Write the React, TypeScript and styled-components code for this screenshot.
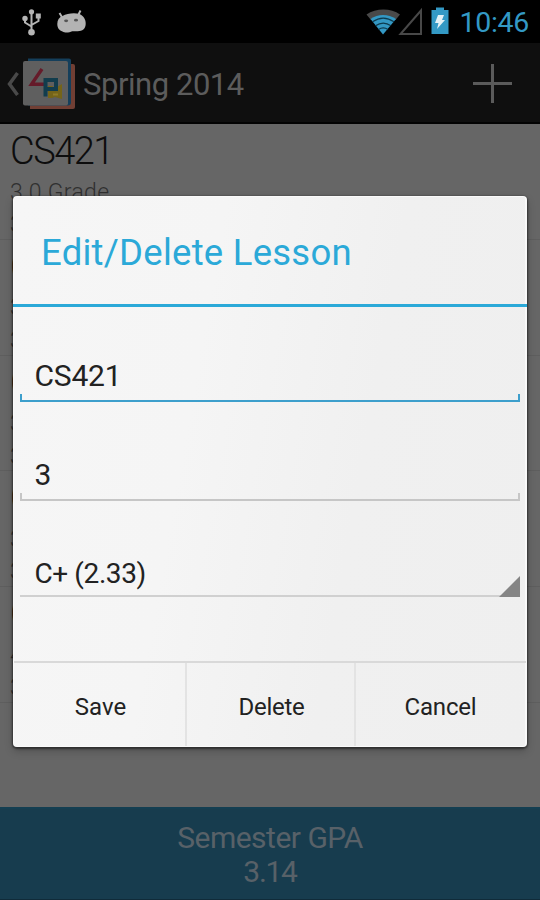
import React from 'react';
import styled, { createGlobalStyle } from 'styled-components';

const GlobalStyle = createGlobalStyle`
  * { box-sizing: border-box; }
  body { margin: 0; background: #666; font-family: Roboto, "Noto Sans", sans-serif; }
`;

const Screen = styled.div`
  position: relative;
  display: flex;
  flex-direction: column;
  width: 540px;
  height: 900px;
  overflow: hidden;
  background: #666;
`;

const Text = styled.span<{ $size: number; $spacing?: number; $weight?: number; $color?: string }>`
  font-size: ${p => p.$size}px;
  font-weight: ${p => p.$weight ?? 400};
  letter-spacing: ${p => p.$spacing ?? 0}px;
  color: ${p => p.$color ?? '#222'};
  line-height: 1;
  white-space: nowrap;
`;

const StatusBar = styled.header`
  display: flex;
  align-items: flex-start;
  justify-content: space-between;
  height: 43px;
  padding: 7px 11px 0 21px;
  background: #000;
  svg { display: block; flex: none; }
`;

const StatusGroup = styled.div<{ $gap: number }>`
  display: flex;
  gap: ${p => p.$gap}px;
`;

const Clock = styled(Text)`
  padding: 2px 0 0 11px;
`;

const ActionBar = styled.nav`
  display: flex;
  align-items: center;
  height: 81px;
  padding: 3px 27px 0 6px;
  background: #0f0f0f;
  border-bottom: 2px solid #030303;
  svg { display: block; flex: none; }
`;

const BarTitle = styled(Text)`
  flex: 1;
  margin-left: 7px;
  padding-top: 1px;
`;

const LessonList = styled.main`
  flex: 1;
`;

const LessonRow = styled.article`
  display: flex;
  flex-direction: column;
  height: 115.8px;
  padding: 8px 10px 0;
  border-bottom: 1px solid #5e5e5e;
`;

const LessonTitle = styled(Text)`
  margin-bottom: 1px;
`;

const LessonDetail = styled(Text)`
  margin-top: 9.5px;
`;

const GpaBar = styled.footer`
  display: flex;
  flex-direction: column;
  align-items: center;
  gap: 4px;
  height: 93px;
  padding-top: 14px;
  background: #173c4e;
  border-top: 2px solid #143f52;
  border-bottom: 1px solid #102b39;
`;

const Dialog = styled.section`
  position: absolute;
  left: 13px;
  top: 196px;
  display: flex;
  flex-direction: column;
  width: 514px;
  height: 551px;
  border: 1px solid #fafafa;
  border-right: 2px solid #f9f9f9;
  border-radius: 4px;
  background: linear-gradient(100deg, #f6f6f6 0%, #f5f5f5 35%, #f0f0f0 65%, #efefef 100%);
  box-shadow: 0 1px 2px 1px rgba(0, 0, 0, 0.45), 0 4px 9px rgba(0, 0, 0, 0.22);
`;

const DialogTitle = styled.h2`
  display: flex;
  align-items: center;
  height: 110px;
  margin: 0 -2px 0 -1px;
  padding: 5px 0 0 28px;
  border-bottom: 3px solid #2ba9d8;
`;

const Form = styled.div`
  display: flex;
  flex-direction: column;
  flex: 1;
  padding: 0 5px 0 6px;
`;

const Field = styled.div<{ $height: number; $color: string; $line: number; $ticks: boolean }>`
  display: flex;
  align-items: flex-end;
  height: ${p => p.$height}px;
  padding: 0 0 ${p => (p.$ticks ? 11 : 9)}px 14.5px;
  background-image: ${p => {
    const fill = `linear-gradient(${p.$color}, ${p.$color})`;
    return p.$ticks ? `${fill}, ${fill}, ${fill}` : fill;
  }};
  background-repeat: no-repeat;
  background-position: left bottom, left bottom, right bottom;
  background-size: 100% ${p => p.$line}px, 2px 8px, 2px 8px;
`;

const Spinner = styled(Field)`
  justify-content: space-between;
  svg { display: block; margin-bottom: -9px; }
`;

const Actions = styled.div`
  display: flex;
  height: 85px;
  margin-right: -1px;
  border-top: 2px solid #d9d9d9;
`;

const ActionButton = styled.button<{ $width: number }>`
  width: ${p => p.$width}px;
  padding: 5px 0 0 2px;
  border: 0;
  border-right: 2px solid #e3e3e3;
  background: transparent;
  font-family: inherit;
  text-align: center;
  &:last-child { border-right: 0; padding-right: 3px; }
`;

const UsbIcon = () => (
  <svg width="22" height="30" viewBox="0 0 22 30" fill="none" stroke="#b5b5b5" strokeWidth="2">
    <path d="M10.500 5v20M10.500 19.500L4 15.500V11M10.500 18l7-4V9" />
    <circle cx="10.500" cy="4.800" r="2.600" fill="#b5b5b5" stroke="none" />
    <circle cx="4" cy="11.500" r="2.700" fill="#b5b5b5" stroke="none" />
    <path d="M14.800 6.500h5v5h-5z" fill="#b5b5b5" stroke="none" />
    <circle cx="10.500" cy="25.200" r="3.300" fill="#b5b5b5" stroke="none" />
  </svg>
);

const DroidIcon = () => (
  <svg width="31" height="28" viewBox="0 0 31 28">
    <path d="M3.500 6l3 5M24.500 3.500l-3 6" stroke="#b3b3b3" strokeWidth="2" />
    <path d="M6.500 9C11 6.500 18 5.500 23.500 7c4 2 6.500 5.500 6.200 10-.3 5-3.200 7-8 7.200h-5.500c-3 1.500-7.200 2-9.700.3-3-.8-5.200-3.500-5.200-7.500C1.300 13 3 10.500 6.500 9z" fill="#b3b3b3" />
    <ellipse cx="10.100" cy="13.800" rx="2" ry="1.400" fill="#555" />
    <ellipse cx="20" cy="13.200" rx="2" ry="1.400" fill="#555" />
  </svg>
);

const WifiIcon = () => (
  <svg width="35" height="29" viewBox="0 0 35 29">
    <path d="M.5 7.500C10 .7 25 .7 34 7.500L29.500 13C22 7.500 13 7.500 5 13z" fill="#494949" />
    <path d="M4.500 12C12 6.500 22 6.500 30 12L17 27.500z" fill="#3398c4" />
    <path d="M6.500 14.800c7-4.800 14.500-4.800 21.500 0M9.500 18.800c5-3.500 10.500-3.500 15.500 0M12.500 22.500c3-2 6.500-2 9.500 0" fill="none" stroke="#0d3a4d" strokeWidth="1.200" />
  </svg>
);

const SignalSlot = styled.div`
  margin-left: -3px;
`;

const SignalIcon = () => (
  <svg width="25" height="28" viewBox="0 0 25 28">
    <path d="M23 3.500V27H2.500z" fill="none" stroke="#484848" strokeWidth="2" />
  </svg>
);

const BatterySlot = styled.div`
  margin-left: 8px;
`;

const BatteryIcon = () => (
  <svg width="18" height="28" viewBox="0 0 18 28">
    <path d="M5 .5h8v2.500h4.500v24H.5V3H5z" fill="#3399c5" />
    <path d="M7 8h6l-2 5h3L6 22l1.500-6H4z" fill="#e3f1f6" />
  </svg>
);

const BackIcon = () => (
  <svg width="15" height="26" viewBox="0 0 15 26">
    <path d="M11.500 2L3.500 13l8 11" fill="none" stroke="#494949" strokeWidth="3.500" />
  </svg>
);

const LogoIcon = () => (
  <svg width="55" height="54" viewBox="0 0 55 54">
    <path d="M9 7h43q2 0 2 2v41q0 2-2 2H9z" fill="#713f34" />
    <path d="M7 1.500h41q2 0 2 2v42q0 3-3 3H7z" fill="#153f5b" />
    <rect x="2" y="4" width="45" height="44.500" rx="2" fill="#5f5f5f" />
    <path d="M21 12L10.500 27.200h14" fill="none" stroke="#651b2a" strokeWidth="3.400" />
    <path d="M27 29h4l3 2 7-4v15l-7-2-3 1h-4z" fill="#756419" />
    <path d="M24.500 39.500V23h10.500v9h-9" fill="none" stroke="#123d4d" strokeWidth="4" />
    <path d="M32 37.500h5" stroke="#8e7a27" strokeWidth="2" />
  </svg>
);

const PlusIcon = () => (
  <svg width="40" height="40" viewBox="0 0 40 40">
    <path d="M19.500 0v39M0 19.500h39" stroke="#5b5b5b" strokeWidth="3" />
  </svg>
);

const SpinnerArrow = () => (
  <svg width="21" height="21" viewBox="0 0 21 21">
    <path d="M21 0V21H0z" fill="#858585" />
  </svg>
);

const lessons = [
  { name: 'CS421', grade: '3.0 Grade', credit: '3 Credit' },
  { name: 'CS453', grade: '3.3 Grade', credit: '3 Credit' },
  { name: 'CS464', grade: '3.3 Grade', credit: '3 Credit' },
  { name: 'CS476', grade: '3.0 Grade', credit: '3 Credit' },
  { name: 'CS491', grade: '4.0 Grade', credit: '3 Credit' },
];

export default function App() {
  return (
    <>
      <GlobalStyle />
      <Screen>
        <StatusBar>
          <StatusGroup $gap={13}>
            <UsbIcon />
            <DroidIcon />
          </StatusGroup>
          <StatusGroup $gap={0}>
            <WifiIcon />
            <SignalSlot><SignalIcon /></SignalSlot>
            <BatterySlot><BatteryIcon /></BatterySlot>
            <Clock $size={28.5} $spacing={-0.3} $color="#3399c5">10:46</Clock>
          </StatusGroup>
        </StatusBar>
        <ActionBar>
          <BackIcon />
          <LogoIcon />
          <BarTitle $size={31} $spacing={-0.45} $color="#5c5c5c">Spring 2014</BarTitle>
          <PlusIcon />
        </ActionBar>
        <LessonList>
          {lessons.map(lesson => (
            <LessonRow key={lesson.name}>
              <LessonTitle $size={38} $weight={300} $spacing={-1.5} $color="#0d0d0d">{lesson.name}</LessonTitle>
              <LessonDetail $size={23} $weight={300} $spacing={0.3} $color="#303030">{lesson.grade}</LessonDetail>
              <LessonDetail $size={23} $weight={300} $spacing={0.3} $color="#303030">{lesson.credit}</LessonDetail>
            </LessonRow>
          ))}
        </LessonList>
        <GpaBar>
          <Text $size={30} $spacing={-0.5} $color="#586168">Semester GPA</Text>
          <Text $size={30} $spacing={-1.3} $color="#586168">3.14</Text>
        </GpaBar>
        <Dialog role="dialog">
          <DialogTitle>
            <Text $size={36.5} $spacing={0.25} $color="#2ba9d8">Edit/Delete Lesson</Text>
          </DialogTitle>
          <Form>
            <Field $height={95} $color="#3d9fcc" $line={2} $ticks>
              <Text $size={30} $spacing={-0.2}>CS421</Text>
            </Field>
            <Field $height={99} $color="#c6c6c6" $line={2} $ticks>
              <Text $size={30}>3</Text>
            </Field>
            <Spinner $height={96} $color="#d0d0d0" $line={2} $ticks={false}>
              <Text $size={28} $spacing={-0.4}>C+ (2.33)</Text>
              <SpinnerArrow />
            </Spinner>
          </Form>
          <Actions>
            <ActionButton $width={173}><Text $size={24}>Save</Text></ActionButton>
            <ActionButton $width={169}><Text $size={24} $spacing={-0.3}>Delete</Text></ActionButton>
            <ActionButton $width={170}><Text $size={24} $spacing={-0.2}>Cancel</Text></ActionButton>
          </Actions>
        </Dialog>
      </Screen>
    </>
  );
}
